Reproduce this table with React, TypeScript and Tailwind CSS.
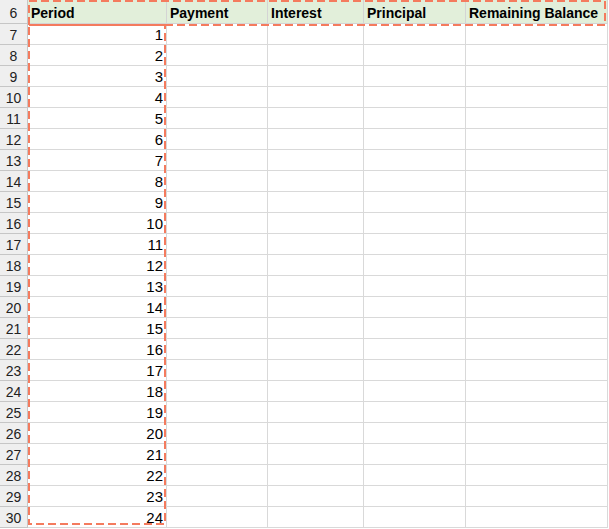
import React from "react";

const COLS = [
  { label: "Period", width: "w-[139px]" },
  { label: "Payment", width: "w-[101px]" },
  { label: "Interest", width: "w-[96px]" },
  { label: "Principal", width: "w-[102px]" },
  { label: "Remaining Balance", width: "w-[142px]" },
];

const periods = Array.from({ length: 24 }, (_, i) => i + 1);

function RowHeader({ n, tall }: { n: number; tall?: boolean }) {
  return (
    <div
      className={`w-[28px] ${tall ? "h-[24px] pt-[3px]" : "h-[21px] pt-[2px]"} shrink-0 flex items-center justify-center bg-[#efefef] border-r border-b border-[#c6c6c6] text-[14px] text-[#222]`}
    >
      {n}
    </div>
  );
}

export default function App() {
  return (
    <div
      className="relative w-[609px] h-[529px] bg-white overflow-hidden"
      style={{ fontFamily: '"Liberation Sans", Arial, sans-serif' }}
    >
      <div className="flex flex-col">
        <div className="flex">
          <RowHeader n={6} tall />
          {COLS.map((c) => (
            <div
              key={c.label}
              className={`${c.width} h-[24px] shrink-0 flex items-center pl-[3px] pt-[4px] bg-[#e2efda] border-r border-b border-[#d4d4d4] text-[14px] font-bold text-black whitespace-nowrap`}
            >
              {c.label}
            </div>
          ))}
        </div>

        {periods.map((p) => (
          <div key={p} className="flex">
            <RowHeader n={p + 6} />
            <div className="w-[139px] h-[21px] shrink-0 flex items-center justify-end pr-[3px] pt-[2px] border-r border-b border-[#d9d9d9] text-[15px] text-black">
              {p}
            </div>
            {COLS.slice(1).map((c) => (
              <div
                key={c.label}
                className={`${c.width} h-[21px] shrink-0 border-r border-b border-[#d9d9d9]`}
              />
            ))}
          </div>
        ))}
      </div>

      {/* copy selection "marching ants" */}
      <svg
        className="absolute left-0 top-0 pointer-events-none"
        width="609"
        height="529"
      >
        <rect
          x="29"
          y="1"
          width="576"
          height="24"
          fill="none"
          stroke="#f47b5e"
          strokeWidth="2"
          strokeDasharray="8 4"
        />
        <rect
          x="29"
          y="25"
          width="136"
          height="499"
          fill="none"
          stroke="#f47b5e"
          strokeWidth="2"
          strokeDasharray="8 4"
        />
      </svg>
    </div>
  );
}
